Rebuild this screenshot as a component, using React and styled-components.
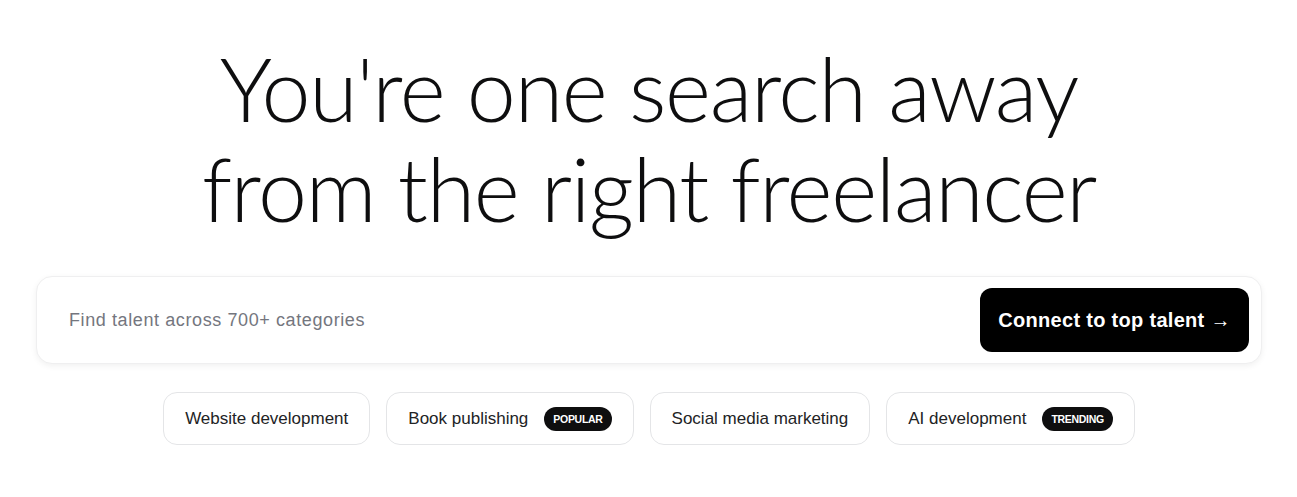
import React from "react";
import styled, { createGlobalStyle } from "styled-components";

const GlobalStyle = createGlobalStyle`
  body {
    margin: 0;
    background: #fff;
    font-family: "Liberation Sans", Arial, sans-serif;
    color: #222325;
  }
`;

const chips = [
  { label: "Website development" },
  { label: "Book publishing", badge: "POPULAR" },
  { label: "Social media marketing" },
  { label: "AI development", badge: "TRENDING" },
];

const App = () => {
  return (
    <>
      <GlobalStyle />
      <Hero>
        <Title>
          You're one search away
          <br />
          from the right freelancer
        </Title>
        <SearchBar>
          <SearchInput placeholder="Find talent across 700+ categories" />
          <ConnectButton>Connect to top talent →</ConnectButton>
        </SearchBar>
        <ChipRow>
          {chips.map((c) => (
            <Chip key={c.label}>
              {c.label}
              {c.badge && <Badge>{c.badge}</Badge>}
            </Chip>
          ))}
        </ChipRow>
      </Hero>
    </>
  );
};

const Hero = styled.div`
  display: flex;
  flex-direction: column;
  align-items: center;
  padding: 38px 35px 0 36px;
`;

const Title = styled.h1`
  margin: 0;
  font-family: Lato, "Noto Sans", sans-serif;
  font-weight: 300;
  font-size: 88px;
  line-height: 100px;
  letter-spacing: -1.3px;
  text-align: center;
  color: #0e0e0f;
`;

const SearchBar = styled.div`
  margin-top: 38px;
  width: 100%;
  box-sizing: border-box;
  height: 88px;
  display: flex;
  align-items: center;
  padding: 0 12px 0 30px;
  border: 1px solid #efeff0;
  border-radius: 16px;
  box-shadow: 0 2px 6px rgba(0, 0, 0, 0.06);
  background: #fff;
`;

const SearchInput = styled.input`
  flex: 1;
  border: none;
  outline: none;
  font-family: "Liberation Sans", Arial, sans-serif;
  font-size: 18px;
  letter-spacing: 0.6px;
  color: #222325;
  background: transparent;
  &::placeholder {
    color: #74767e;
  }
`;

const ConnectButton = styled.button`
  height: 64px;
  width: 269px;
  padding: 0;
  border: none;
  border-radius: 12px;
  background: #000;
  color: #fff;
  font-family: "Liberation Sans", Arial, sans-serif;
  font-weight: 700;
  font-size: 20px;
  letter-spacing: 0.3px;
  cursor: pointer;
`;

const ChipRow = styled.div`
  margin-top: 28px;
  display: flex;
  gap: 16px;
`;

const Chip = styled.div`
  height: 53px;
  box-sizing: border-box;
  display: flex;
  align-items: center;
  gap: 16px;
  padding: 0 21px;
  border: 1px solid #e4e5e7;
  border-radius: 14px;
  font-size: 17px;
  color: #222325;
`;

const Badge = styled.span`
  display: inline-flex;
  align-items: center;
  height: 24px;
  padding: 0 9px;
  border-radius: 12px;
  background: #0e0e0f;
  color: #fff;
  font-size: 10.5px;
  font-weight: 700;
  letter-spacing: -0.3px;
`;

export default App;
